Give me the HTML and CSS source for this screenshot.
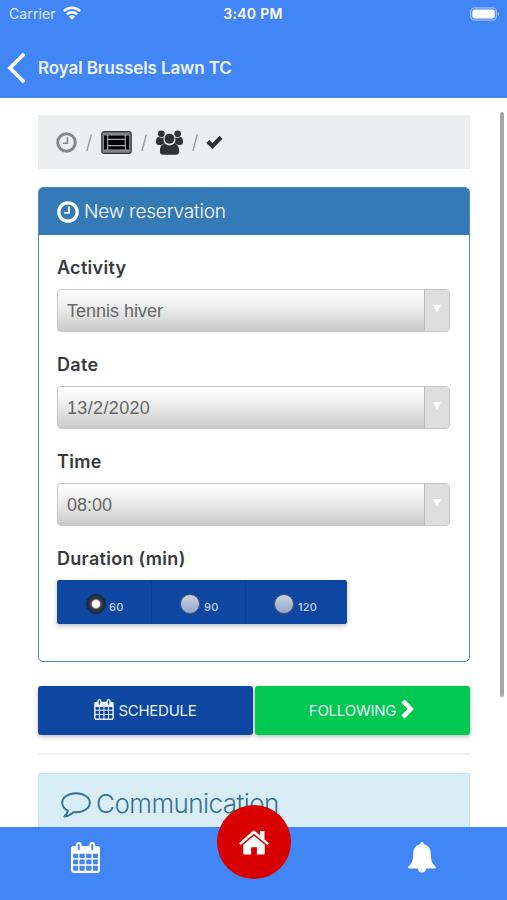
FILE: index.html
```html
<!DOCTYPE html>
<html lang="en">
<head>
<meta charset="utf-8">
<title>Royal Brussels Lawn TC</title>
<link rel="stylesheet" href="styles.css">
</head>
<body>
<svg class="symbols" aria-hidden="true">
  <symbol id="clock" viewBox="0 0 22 22">
    <circle cx="11" cy="11" r="9.2" fill="none" stroke="currentColor" stroke-width="3.2"/>
    <path d="M12 5.5V11.8H7.2" fill="none" stroke="currentColor" stroke-width="1.8"/>
  </symbol>
  <symbol id="calendar" viewBox="0 0 30 32">
    <path fill="currentColor" fill-rule="evenodd" d="M3 4H5V3A3 3 0 0 1 11 3V4H19V3A3 3 0 0 1 25 3V4H27A3 3 0 0 1 30 7V29A3 3 0 0 1 27 32H3A3 3 0 0 1 0 29V7A3 3 0 0 1 3 4ZM2.2 12V16.5H7.2V12ZM8.7 12V16.5H14.2V12ZM15.7 12V16.5H21.2V12ZM22.7 12V16.5H27.8V12ZM2.2 18V23H7.2V18ZM8.7 18V23H14.2V18ZM15.7 18V23H21.2V18ZM22.7 18V23H27.8V18ZM2.2 24.5V29.8H7.2V24.5ZM8.7 24.5V29.8H14.2V24.5ZM15.7 24.5V29.8H21.2V24.5ZM22.7 24.5V29.8H27.8V24.5ZM7 3V7.5Q7 8.5 8 8.5T9 7.5V3Q9 2 8 2T7 3ZM21 3V7.5Q21 8.5 22 8.5T23 7.5V3Q23 2 22 2T21 3Z"/>
  </symbol>
</svg>
<div class="app">
  <header class="topbar">
    <div class="status">
      <div class="carrier">Carrier
        <svg class="wifi" viewBox="0 0 18 14"><g fill="none" stroke="#fff" stroke-width="2.5"><path d="M.9 5.1A11.6 11.6 0 0 1 17.1 5.1"/><path d="M4 8.3A7.1 7.1 0 0 1 14 8.3"/></g><path fill="#fff" d="M9 13.8L5.8 10.5Q9 7.8 12.2 10.5Z"/></svg>
      </div>
      <div class="clock-time">3:40 PM</div>
      <div class="battery-slot"><svg class="battery" viewBox="0 0 31 14"><rect x=".7" y=".7" width="26.6" height="12.6" rx="4" fill="none" stroke="#9dbffb" stroke-width="1.3"/><rect x="2.4" y="2.4" width="23.2" height="9.2" rx="2.2" fill="#fff"/><path d="M28.7 5Q31.6 7 28.7 9Z" fill="#9dbffb"/></svg></div>
    </div>
    <div class="nav">
      <svg class="back" viewBox="0 0 18 30"><path d="M16 2L3 15L16 28" fill="none" stroke="#fff" stroke-width="3.8" stroke-linecap="round"/></svg>
      <h1>Royal Brussels Lawn TC</h1>
    </div>
  </header>

  <main class="content">
    <div class="breadcrumb">
      <svg class="bc-clock"><use href="#clock"/></svg>
      <span class="slash">/</span>
      <svg class="court" viewBox="0 0 32 24"><rect x=".7" y=".7" width="30.6" height="22.6" rx="2.5" fill="#818384" stroke="#333" stroke-width="1.3"/><rect x="3" y="4" width="26" height="16" fill="#000"/><path d="M3.2 4.2H28.8M3.2 19.8H28.8M6.8 4V20M25.2 4V20M7 8.8H25M7 15.2H25" stroke="#a6a8a9" stroke-width="1.2"/></svg>
      <span class="slash">/</span>
      <svg class="users" viewBox="0 0 28 26"><g fill="#303336"><circle cx="5.5" cy="4" r="3.5"/><circle cx="22.5" cy="4" r="3.5"/><path d="M0 12Q0 7.2 3 7.2Q5.5 9 8.2 7.8L7.7 9.5Q7.7 12 9.5 14Q6.5 14.2 5.3 15.5H2.5Q0 15.5 0 13Z"/><path d="M28 12Q28 7.2 25 7.2Q22.5 9 19.8 7.8L20.3 9.5Q20.3 12 18.5 14Q21.5 14.2 22.7 15.5H25.5Q28 15.5 28 13Z"/><circle cx="14" cy="9" r="5.2"/><path d="M9.5 14.2Q14 17.8 18.5 14.2Q24 14 24 22Q24 25.7 20.5 25.7H7.5Q4 25.7 4 22Q4 14 9.5 14.2Z"/></g></svg>
      <span class="slash">/</span>
      <svg class="check" viewBox="0 0 17 14"><path d="M1.8 6.5L6.5 11L15 2.2" fill="none" stroke="#303336" stroke-width="4.2"/></svg>
    </div>

    <section class="panel">
      <h2 class="panel-heading"><svg class="head-clock"><use href="#clock"/></svg><span>New reservation</span></h2>
      <div class="panel-body">
        <div class="field"><div class="label">Activity</div><div class="select"><span>Tennis hiver</span><i class="arrow"></i></div></div>
        <div class="field"><div class="label">Date</div><div class="select"><span class="v-date">13/2/2020</span><i class="arrow"></i></div></div>
        <div class="field"><div class="label">Time</div><div class="select"><span>08:00</span><i class="arrow"></i></div></div>
        <div class="label">Duration (min)</div>
        <div class="durations">
          <div class="duration"><i class="radio on"></i><span>60</span></div>
          <div class="duration"><i class="radio"></i><span>90</span></div>
          <div class="duration"><i class="radio"></i><span>120</span></div>
        </div>
      </div>
    </section>

    <div class="actions">
      <div class="button schedule"><svg class="cal-small"><use href="#calendar"/></svg><span>SCHEDULE</span></div>
      <div class="button following"><span>FOLLOWING</span><svg class="next" viewBox="0 0 13 20"><path d="M2 2L9.7 10L2 18" fill="none" stroke="#fff" stroke-width="4.6"/></svg></div>
    </div>
    <hr>
    <section class="communication">
      <svg class="comment" viewBox="0 0 30 26"><path d="M15 1.2C7.2 1.2 1.2 5.5 1.2 10.7C1.2 14.2 3.7 17 7 18.7C6.4 21.2 5.2 22.8 3.3 24.5C7.2 24.1 10.2 22.5 12.3 20.1L15 20.3C22.8 20.3 28.8 16 28.8 10.7C28.8 5.5 22.8 1.2 15 1.2Z" fill="none" stroke="#347292" stroke-width="1.9" stroke-linejoin="round"/></svg>
      <span>Communication</span>
    </section>
    <div class="scrollbar"></div>
  </main>

  <footer class="tabbar">
    <svg class="tab-cal"><use href="#calendar"/></svg>
    <div class="home"><svg viewBox="0 0 30 25"><path fill="#fff" d="M15 0.3L21 5.5V1H25.5V9.4L30 13.2L28.3 15L15 3.8L1.7 15L0 13.2L13.5 1.2ZM15 5.7L25.8 14.8V23.2Q25.8 24.5 24.5 24.5H17.9V17.2H12.1V24.5H5.5Q4.2 24.5 4.2 23.2V14.8Z"/></svg></div>
    <svg class="bell" viewBox="0 0 28 31"><path fill="#fff" d="M14 0Q15.8 0 15.8 2.3C20.5 3.2 22.8 7 22.8 12C22.8 19 24.5 22 28 25Q28 26.5 26.5 26.5H18Q18 30.5 14 30.5T10 26.5H1.5Q0 26.5 0 25C3.5 22 5.2 19 5.2 12C5.2 7 7.5 3.2 12.2 2.3Q12.2 0 14 0Z"/><path d="M11.3 26.6Q11.4 29.2 14 29.3" fill="none" stroke="#b5cffd" stroke-width=".8"/></svg>
  </footer>
</div>
</body>
</html>
```

FILE: styles.css
```css
* { box-sizing: border-box; }
body { margin: 0; background: #fff; font-family: Inter, "Liberation Sans", sans-serif; }
svg { display: block; flex: none; }
.symbols { position: absolute; width: 0; height: 0; }
.app { display: flex; flex-direction: column; height: 900px; overflow: hidden; }

.topbar { flex: none; height: 98px; background: #4285f4; color: #fff; }
.status { display: grid; grid-template-columns: 1fr auto 1fr; height: 27px; align-items: center; padding: 0 7px 0 9px; }
.carrier { display: flex; align-items: center; gap: 7px; font-size: 14px; color: #dce8fd; letter-spacing: .1px; }
.wifi { width: 18px; height: 14px; margin-top: -1px; }
.clock-time { font-size: 14px; font-weight: 600; letter-spacing: .3px; margin-left: -3px; }
.battery-slot { display: flex; justify-content: flex-end; }
.battery { width: 30px; height: 14px; }
.nav { display: flex; align-items: center; gap: 13px; padding-left: 7px; height: 82px; }
.back { width: 18px; height: 30px; }
h1 { margin: 0; font-size: 17px; font-weight: 600; letter-spacing: -.1px; color: #edf3fe; }

.content { position: relative; flex: 1; min-height: 0; overflow: hidden; padding: 17px 37px 0 38px; }
.scrollbar { position: absolute; right: 3px; top: 14px; width: 4px; height: 585px; border-radius: 2px; background: #a5a5a5; }
.breadcrumb { display: flex; align-items: center; height: 54px; background: #eceeef; padding-left: 18px; gap: 7px; color: #818a91; }
.bc-clock { width: 21px; height: 21px; }
.slash { width: 10px; text-align: center; font-size: 19px; font-weight: 300; color: #888f94; }
.court { width: 31px; height: 23px; }
.users { width: 27px; height: 25px; }
.check { width: 17px; height: 14px; margin-left: -1px; margin-top: -1px; }

.panel { height: 475px; margin-top: 18px; border: 1px solid #4b8bbf; border-radius: 5px; overflow: hidden; }
.panel-heading { display: flex; align-items: center; gap: 5px; height: 47px; margin: 0; padding-left: 18px; background: #337ab7; color: #fff; font-size: 19px; font-weight: 300; letter-spacing: -.2px; }
.head-clock { width: 22px; height: 22px; }
.panel-body { padding: 19px 19px 0 18px; }
.field { height: 97px; }
.label { height: 26px; margin-bottom: 9px; line-height: 27px; font-size: 18px; font-weight: 600; letter-spacing: .3px; color: #373a3c; }
.select { display: flex; height: 43px; border: 1px solid #c8c8c8; border-radius: 4px; background: linear-gradient(#fff, #f1f1f1 35%, #cacaca); color: #666; font-size: 18px; line-height: 42px; padding-left: 9px; overflow: hidden; }
.select span { flex: 1; font-family: "Liberation Sans", sans-serif; }
.select .v-date { letter-spacing: .35px; }
.arrow { width: 25px; background: #dedede; border-left: 1px solid #bbb; display: flex; justify-content: center; padding-top: 15px; }
.arrow::after { content: ""; width: 0; height: 0; border: 4px solid transparent; border-top: 8px solid #fff; border-bottom: 0; }
.durations { display: grid; grid-template-columns: 94px 94px 102px; width: 290px; height: 44px; border-radius: 2px; background: #0d47a1; box-shadow: 0 2px 5px rgba(0,0,0,.25); }
.duration { display: flex; align-items: center; gap: 3px; padding: 3px 0 0 29px; color: #c5d6f3; font-size: 11px; font-weight: 500; letter-spacing: .2px; }
.duration + .duration { border-left: 1px solid #0b4097; }
.duration span { padding-top: 7px; }
.radio { width: 20px; height: 20px; border: 1px solid #555b66; border-radius: 50%; background: linear-gradient(#cbd2e0, #93a5cc); }
.duration + .duration .radio { margin-left: -1px; }
.duration + .duration { gap: 4px; }
.radio.on { background: radial-gradient(circle, #fff 0 3.5px, #555a64 4.8px, #333843 6px, #222733 9px); border-color: #1a2439; }

.actions { display: grid; grid-template-columns: 1fr 1fr; gap: 2px; margin-top: 24px; }
.button { display: flex; align-items: center; justify-content: center; gap: 4px; height: 49px; border-radius: 3px; color: #e9f0fb; font-size: 15px; letter-spacing: -.25px; box-shadow: 0 2px 5px rgba(0,0,0,.25); }
.schedule { background: #0d47a1; }
.following { background: #00c851; }
.cal-small { width: 20px; height: 21px; margin-top: -2px; }
.next { width: 13px; height: 20px; margin-top: -3px; }
.following { padding-right: 2px; gap: 5px; }
hr { height: 2px; margin: 18px 0; border: 0; background: #f0f0f0; }
.communication { display: flex; align-items: flex-start; gap: 5px; height: 80px; padding: 14px 22px 0; border: 1px solid #bce8f1; background: #d9edf7; color: #347292; font-size: 26px; font-weight: 300; letter-spacing: -.55px; }
.communication span { line-height: 31px; }
.comment { width: 30px; height: 26px; margin-top: 4px; }

.tabbar { position: relative; flex: none; height: 73px; background: #4285f4; color: #fff; display: grid; grid-template-columns: 170px 1fr 170px; justify-items: center; }
.tab-cal { width: 29px; height: 31px; margin-top: 15px; }
.home { width: 74px; height: 74px; margin-top: -22px; border-radius: 50%; background: #d80000; display: flex; align-items: center; justify-content: center; }
.home svg { width: 30px; height: 25px; }
.bell { width: 28px; height: 31px; margin-top: 15px; }
```
